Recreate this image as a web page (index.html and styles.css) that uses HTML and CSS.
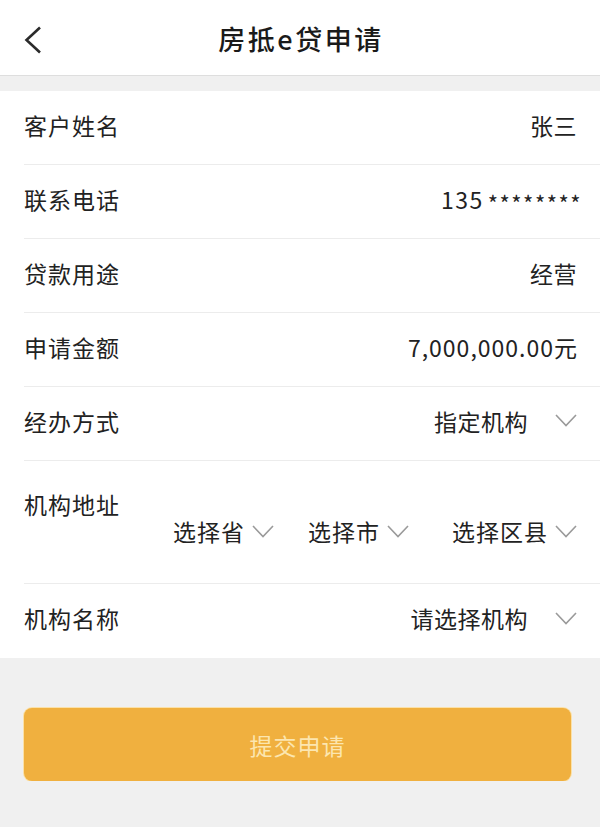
FILE: index.html
```html
<!DOCTYPE html>
<html lang="zh-CN">
<head>
  <meta charset="UTF-8">
  <meta name="viewport" content="width=device-width, initial-scale=1.0">
  <title>房抵e贷申请</title>
  <link rel="stylesheet" href="styles.css">
</head>
<body>
  <header class="topbar">
    <a class="back" href="#">
      <svg width="18" height="28" viewBox="0 0 18 28"><polyline points="16,1.5 2.5,14 16,26.5" fill="none" stroke="#2b2b2b" stroke-width="2.6"/></svg>
    </a>
    <h1>房抵e贷申请</h1>
  </header>

  <div class="form">
    <div class="row">
      <span class="label">客户姓名</span>
      <span class="value">张三</span>
    </div>
    <div class="row">
      <span class="label">联系电话</span>
      <span class="value phone">135<span class="stars">********</span></span>
    </div>
    <div class="row">
      <span class="label">贷款用途</span>
      <span class="value">经营</span>
    </div>
    <div class="row">
      <span class="label">申请金额</span>
      <span class="value amount">7,000,000.00元</span>
    </div>
    <div class="row">
      <span class="label">经办方式</span>
      <span class="value select">指定机构<svg class="arrow" width="22" height="13" viewBox="0 0 22 13"><polyline points="1,1 11,11.5 21,1" fill="none" stroke="#9a9a9a" stroke-width="1.6"/></svg></span>
    </div>
    <div class="row address">
      <span class="label">机构地址</span>
      <div class="picks">
        <span class="pick">选择省<svg class="arrow small" width="22" height="13" viewBox="0 0 22 13"><polyline points="1,1 11,11.5 21,1" fill="none" stroke="#9a9a9a" stroke-width="1.6"/></svg></span>
        <span class="pick">选择市<svg class="arrow small" width="22" height="13" viewBox="0 0 22 13"><polyline points="1,1 11,11.5 21,1" fill="none" stroke="#9a9a9a" stroke-width="1.6"/></svg></span>
        <span class="pick wide">选择区县<svg class="arrow small" width="22" height="13" viewBox="0 0 22 13"><polyline points="1,1 11,11.5 21,1" fill="none" stroke="#9a9a9a" stroke-width="1.6"/></svg></span>
      </div>
    </div>
    <div class="row">
      <span class="label">机构名称</span>
      <span class="value select">请选择机构<svg class="arrow" width="22" height="13" viewBox="0 0 22 13"><polyline points="1,1 11,11.5 21,1" fill="none" stroke="#9a9a9a" stroke-width="1.6"/></svg></span>
    </div>
  </div>

  <div class="actions">
    <button class="submit">提交申请</button>
  </div>
</body>
</html>
```

FILE: styles.css
```css
body {
  font-family: "Noto Sans CJK SC", "Noto Sans", sans-serif;
  margin: 0;
  background: #f0f0f0;
  color: #222;
}
.topbar {
  height: 75px;
  background: #fff;
  border-bottom: 1px solid #dedede;
  display: flex;
  align-items: center;
  justify-content: center;
  position: relative;
}
.back {
  position: absolute;
  left: 24px;
  top: 26px;
  display: block;
  line-height: 0;
}
.topbar h1 {
  margin: 0;
  font-size: 27px;
  font-weight: 500;
  letter-spacing: 2.5px;
  color: #1a1a1a;
  padding-left: 2px;
  margin-top: 2px;
}
.form {
  margin-top: 15px;
  background: #fff;
  padding-left: 24px;
}
.row {
  box-sizing: border-box;
  height: 74px;
  padding-bottom: 6px;
  border-bottom: 1px solid #ececec;
  display: flex;
  align-items: center;
  justify-content: space-between;
  padding-right: 23px;
  font-size: 23px;
}
.row:last-child {
  border-bottom: none;
  height: 74px;
}
.label {
  font-size: 23px;
  letter-spacing: 1px;
}
.value {
  display: flex;
  align-items: center;
  letter-spacing: 0.5px;
}
.phone {
  margin-right: -5px;
  letter-spacing: 1.5px;
}
.stars {
  font-size: 22px;
  letter-spacing: 1.5px;
  margin-left: 4px;
  position: relative;
  top: 3px;
}
.amount {
  letter-spacing: 1px;
  margin-right: -1px;
}
.select .arrow {
  margin-left: 27px;
}
.address {
  height: auto;
  display: block;
  padding-top: 29px;
  padding-bottom: 39px;
}
.address .label {
  display: block;
  line-height: 28px;
}
.picks {
  display: flex;
  justify-content: flex-end;
  line-height: 26px;
}
.pick {
  display: flex;
  align-items: center;
  letter-spacing: 1px;
}
.pick + .pick {
  margin-left: 34px;
}
.pick.wide {
  margin-left: 43px;
}
.arrow.small {
  margin-left: 7px;
}
.actions {
  padding: 50px 29px 0 24px;
}
.submit {
  width: 100%;
  height: 73px;
  border: none;
  border-radius: 8px;
  background: #f0b03f;
  box-shadow: 0 0 0 1px #fbe1a8;
  color: #fce6b0;
  font-family: inherit;
  font-size: 23px;
  letter-spacing: 1px;
}
```
